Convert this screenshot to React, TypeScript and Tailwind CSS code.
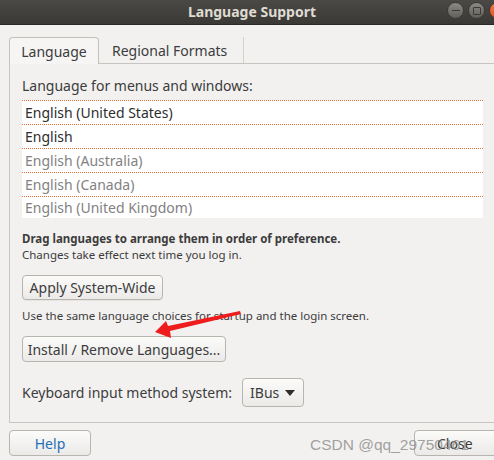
import React from "react";

const rows = [
  { t: "English (United States)", dim: false },
  { t: "English", dim: false },
  { t: "English (Australia)", dim: true },
  { t: "English (Canada)", dim: true },
  { t: "English (United Kingdom)", dim: true },
];

export default function App() {
  return (
    <div
      className="relative w-[494px] h-[460px] overflow-hidden bg-[#f2f1f0] text-[#3c3c3c]"
      style={{ fontFamily: "'Noto Sans', 'Open Sans', sans-serif" }}
    >
      {/* Title bar */}
      <div className="relative h-[25px] flex items-center justify-center bg-gradient-to-b from-[#4a4945] to-[#3a3935] border-b border-[#2a2926]">
        <span className="ml-[10px] text-[14px] font-bold text-[#dfdbd2] leading-none">Language Support</span>
        <div className="absolute top-[2px] left-[447px] flex gap-[4px]">
          <div className="w-[17px] h-[17px] rounded-full bg-gradient-to-b from-[#8a8984] to-[#605f5a] border border-[#3a3935] flex items-center justify-center">
            <div className="w-[8px] h-[1.5px] bg-[#3c3b37]" />
          </div>
          <div className="w-[17px] h-[17px] rounded-full bg-gradient-to-b from-[#8a8984] to-[#605f5a] border border-[#3a3935] flex items-center justify-center">
            <div className="w-[8px] h-[8px] border-[1.5px] border-[#3c3b37] rounded-[1px]" />
          </div>
          <div className="w-[17px] h-[17px] rounded-full bg-gradient-to-b from-[#f57a4f] to-[#e0501d] border border-[#3a3935]" />
        </div>
      </div>

      {/* Notebook */}
      <div className="pl-[9px] pt-[12px]">
        <div className="flex items-end h-[26px] text-[14px]">
          <div className="relative z-10 -mb-px h-[27px] w-[90px] flex items-center justify-center bg-[#f6f5f4] border border-b-0 border-[#c4c1bb] rounded-t-[4px]">
            Language
          </div>
          <div className="h-[26px] w-[145px] flex items-center pl-[13px] border-r border-[#d4d1cc]">Regional Formats</div>
        </div>
        <div className="w-[520px] h-[360px] border border-[#c8c5c0] bg-[#f2f1f0] pl-[12px] pt-[10px]">
          <div className="h-[22px] flex items-center text-[14px]">Language for menus and windows:</div>
          <div className="mt-[4px] w-[461px] bg-white">
            {rows.map((r, i) => (
              <div
                key={i}
                className={`flex items-center pl-[3px] border-t border-dotted border-[#e8733a] text-[14px] ${
                  i === 4 ? "h-[22px]" : "h-[24px]"
                } ${r.dim ? "text-[#828282]" : "text-[#2e2e2e]"}`}
              >
                {r.t}
              </div>
            ))}
          </div>
          <div className="mt-[13px] text-[11.5px] leading-[16px]">
            <div className="font-bold">Drag languages to arrange them in order of preference.</div>
            <div>Changes take effect next time you log in.</div>
          </div>
          <div className="mt-[12px] w-[141px] h-[25px] flex items-center justify-center rounded-[4px] border border-[#b8b4ae] bg-gradient-to-b from-[#fbfbfa] to-[#ebeae8] shadow-[0_1px_0_rgba(0,0,0,0.05)] text-[14px]">
            Apply System-Wide
          </div>
          <div className="mt-[8px] h-[16px] flex items-center text-[11.5px]">
            Use the same language choices for startup and the login screen.
          </div>
          <div className="mt-[12px] w-[204px] h-[26px] flex items-center justify-center rounded-[4px] border border-[#b8b4ae] bg-gradient-to-b from-[#fbfbfa] to-[#ebeae8] text-[14px]">
            Install / Remove Languages...
          </div>
          <div className="mt-[16px] flex items-center h-[29px] text-[14px]">
            <span>Keyboard input method system:</span>
            <div className="ml-[10px] w-[62px] h-[29px] flex items-center justify-between pl-[7px] pr-[8px] rounded-[4px] border border-[#b8b4ae] bg-gradient-to-b from-[#fbfbfa] to-[#ebeae8]">
              <span>IBus</span>
              <svg width="10" height="6" viewBox="0 0 10 6">
                <path d="M0 0 L10 0 L5 6 Z" fill="#2e2e2e" />
              </svg>
            </div>
          </div>
        </div>
        <div className="mt-[7px] flex justify-between">
          <div className="w-[82px] h-[26px] flex items-center justify-center rounded-[4px] border border-[#b8b4ae] bg-gradient-to-b from-[#fbfbfa] to-[#ebeae8] text-[14px] text-[#1f6fb5]">
            Help
          </div>
          <div className="mr-[-20px] w-[100px] h-[26px] flex items-center pl-[22px] rounded-[4px] border border-[#b8b4ae] bg-gradient-to-b from-[#fbfbfa] to-[#ebeae8] text-[14px]">
            Close
          </div>
        </div>
      </div>

      {/* Red arrow annotation */}
      <svg className="absolute left-0 top-0 pointer-events-none" width="494" height="460">
        <polygon
          points="155,332 166,321 168,326 240,311 241,314 170,331 171,338"
          fill="#ee1c1c"
        />
      </svg>

      {/* Watermark */}
      <div
        className="absolute left-[310px] top-[433px] text-[15.5px] text-[#8a8a8a]/80 pointer-events-none"
        style={{ fontFamily: "'Liberation Sans', Arial, sans-serif" }}
      >
        CSDN @qq_29750461
      </div>
    </div>
  );
}
